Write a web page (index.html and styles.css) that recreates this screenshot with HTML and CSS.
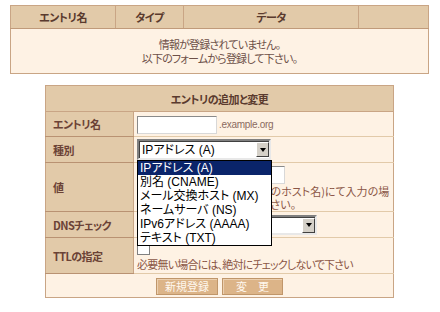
FILE: index.html
```html
<!DOCTYPE html>
<html lang="ja">
<head>
<meta charset="utf-8">
<link rel="stylesheet" href="styles.css">
</head>
<body>
<div class="page">
  <table class="list">
    <colgroup><col class="c-name"><col class="c-type"><col class="c-data"><col class="c-op"></colgroup>
    <tr class="list-head">
      <th>エントリ名</th>
      <th>タイプ</th>
      <th>データ</th>
      <th></th>
    </tr>
    <tr>
      <td colspan="4" class="empty">情報が登録されていません。<br>以下のフォームから登録して下さい。</td>
    </tr>
  </table>

  <table class="form">
    <colgroup><col class="f-label"><col class="f-value"></colgroup>
    <tr class="row-head"><th colspan="2" class="form-title">エントリの追加と変更</th></tr>
    <tr class="row-name">
      <th>エントリ名</th>
      <td><span class="textbox tb-name"></span><span class="domain">.example.org</span></td>
    </tr>
    <tr class="row-type">
      <th>種別</th>
      <td>
        <div class="select sel-type">
          <span class="sel-text">IPアドレス (A)</span>
          <span class="sel-btn"><span class="arrow"></span></span>
          <ul class="droplist">
            <li class="on">IPアドレス (A)</li>
            <li>別名 (CNAME)</li>
            <li>メール交換ホスト (MX)</li>
            <li>ネームサーバ (NS)</li>
            <li>IPv6アドレス (AAAA)</li>
            <li>テキスト (TXT)</li>
          </ul>
        </div>
      </td>
    </tr>
    <tr class="row-value">
      <th>値</th>
      <td>
        <span class="textbox tb-value"></span>
        <p class="note">IPアドレス(CNAMEは転送先のホスト名)にて入力の場<br>合は末尾にドットを付けて下さい。</p>
      </td>
    </tr>
    <tr class="row-dns">
      <th>DNSチェック</th>
      <td>
        <div class="select sel-dns">
          <span class="sel-text"></span>
          <span class="sel-btn"><span class="arrow"></span></span>
        </div>
      </td>
    </tr>
    <tr class="row-ttl">
      <th>TTLの指定</th>
      <td>
        <span class="check"></span>
        <p class="note ttl-note">必要無い場合には、絶対にチェックしないで下さい</p>
      </td>
    </tr>
    <tr class="row-btn">
      <td colspan="2" class="buttons">
        <span class="btn btn-new">新規登録</span><span class="btn btn-mod">変　更</span>
      </td>
    </tr>
  </table>
</div>
</body>
</html>
```

FILE: styles.css
```css
html, body {
  margin: 0;
  padding: 0;
  background: #ffffff;
}
body {
  font-family: "Noto Sans CJK JP", sans-serif;
  font-size: 11px;
  font-feature-settings: "palt";
  color: #5e3c30;
}
.page {
  padding: 5px 0 0 10px;
}
table {
  border-collapse: collapse;
  border-spacing: 0;
  table-layout: fixed;
}
.list {
  width: 419px;
  border: 1px solid #c9a585;
}
.c-name { width: 105px; }
.c-type { width: 68px; }
.c-data { width: 175px; }
.list-head th {
  height: 22px;
  padding: 0;
  background: #e2caa9;
  border-right: 1px solid #c9a585;
  border-bottom: 1px solid #c09a7a;
  font-weight: bold;
  font-size: 11px;
  letter-spacing: -0.5px;
  color: #5a3a2e;
  text-align: center;
}
.list-head th:last-child { border-right: none; }
.empty {
  height: 44px;
  padding: 0;
  background: #fef2e4;
  text-align: center;
  line-height: 14px;
  letter-spacing: -0.8px;
  color: #6d5048;
}

.form {
  margin: 11px 0 0 35px;
  width: 349px;
  border: 1px solid #c9a585;
}
.f-label { width: 88px; }
.form th {
  padding: 0 0 0 7px;
  background: #e2caa9;
  border-right: 1px solid #c9a585;
  border-bottom: 1px solid #b99272;
  text-align: left;
  font-weight: bold;
  font-size: 11px;
  letter-spacing: -0.6px;
  color: #6b4236;
  white-space: nowrap;
}
.form td {
  padding: 0 0 0 3px;
  background: #fef2e4;
  border-bottom: 1px solid #e2caa9;
  vertical-align: middle;
  position: relative;
}
.form .form-title {
  height: 25px;
  padding: 0;
  text-align: center;
  border-right: none;
  border-bottom: 1px solid #c9a585;
  color: #5a3a2e;
}
.row-name th, .row-name td { height: 24px; }
.row-type th, .row-type td { height: 25px; }
.row-value th, .row-value td { height: 48px; }
.row-dns th, .row-dns td { height: 25px; }
.row-ttl th, .row-ttl td { height: 35px; }

.textbox {
  display: inline-block;
  vertical-align: middle;
  background: #fff;
  border: 1px solid #8a8a8a;
  border-right-color: #d8d8d8;
  border-bottom-color: #d8d8d8;
  box-sizing: border-box;
}
.tb-name { width: 80px; height: 18px; }
.domain {
  vertical-align: middle;
  margin-left: 2px;
  font-family: "Liberation Sans", sans-serif;
  font-size: 10px;
  color: #8a6a60;
  letter-spacing: -0.3px;
}
.tb-value {
  display: block;
  width: 148px;
  height: 18px;
  margin-top: 2px;
}
.note {
  margin: 1px 0 0;
  font-size: 11px;
  line-height: 13px;
  color: #8b5646;
  white-space: nowrap;
}
.ttl-note { margin: 3px 0 0; letter-spacing: -0.8px; }

.select {
  position: relative;
  box-sizing: border-box;
  height: 21px;
  background: #fff;
  border: 2px solid #808080;
  border-right-color: #e8e8e8;
  border-bottom-color: #e8e8e8;
  box-shadow: inset 1px 1px 0 #404040;
}
.sel-type { width: 134px; }
.sel-dns { width: 180px; height: 20px; }
.sel-text {
  display: block;
  padding: 1px 0 0 3px;
  font-family: "Liberation Sans", "Noto Sans CJK JP", sans-serif;
  font-size: 12px;
  line-height: 16px;
  color: #000;
}
.sel-btn {
  position: absolute;
  right: 0;
  top: 1px;
  width: 13px;
  height: 15px;
  background: #d4d0c8;
  border: 1px solid #fff;
  border-right-color: #404040;
  border-bottom-color: #404040;
  box-sizing: border-box;
  display: flex;
  align-items: center;
  justify-content: center;
}
.arrow {
  width: 0;
  height: 0;
  border-left: 3px solid transparent;
  border-right: 3px solid transparent;
  border-top: 4px solid #000;
}
.droplist {
  position: absolute;
  left: -2px;
  top: 19px;
  z-index: 5;
  width: 135px;
  margin: 0;
  padding: 0;
  list-style: none;
  background: #fff;
  border: 1px solid #000;
  box-sizing: border-box;
  font-family: "Liberation Sans", "Noto Sans CJK JP", sans-serif;
  font-size: 12px;
  color: #000;
}
.droplist li {
  height: 14px;
  line-height: 14px;
  padding-left: 2px;
  white-space: nowrap;
}
.droplist li.on {
  background: #0a246a;
  color: #fff;
}
.check {
  display: block;
  width: 13px;
  height: 13px;
  margin-top: 2px;
  background: #fff;
  border: 1px solid #808080;
  box-sizing: border-box;
}

.form .buttons {
  height: 23px;
  padding: 0;
  text-align: center;
  border-bottom: none;
}
.btn {
  display: inline-block;
  vertical-align: middle;
  box-sizing: border-box;
  height: 17px;
  line-height: 14px;
  background: #dcb488;
  border: 1px solid #c0966a;
  box-shadow: inset 1px 1px 0 #ecd0b0;
  color: #fff8ef;
  font-size: 11px;
  text-align: center;
}
.btn-new { width: 62px; margin-right: 4px; }
.btn-mod { width: 61px; }
```
